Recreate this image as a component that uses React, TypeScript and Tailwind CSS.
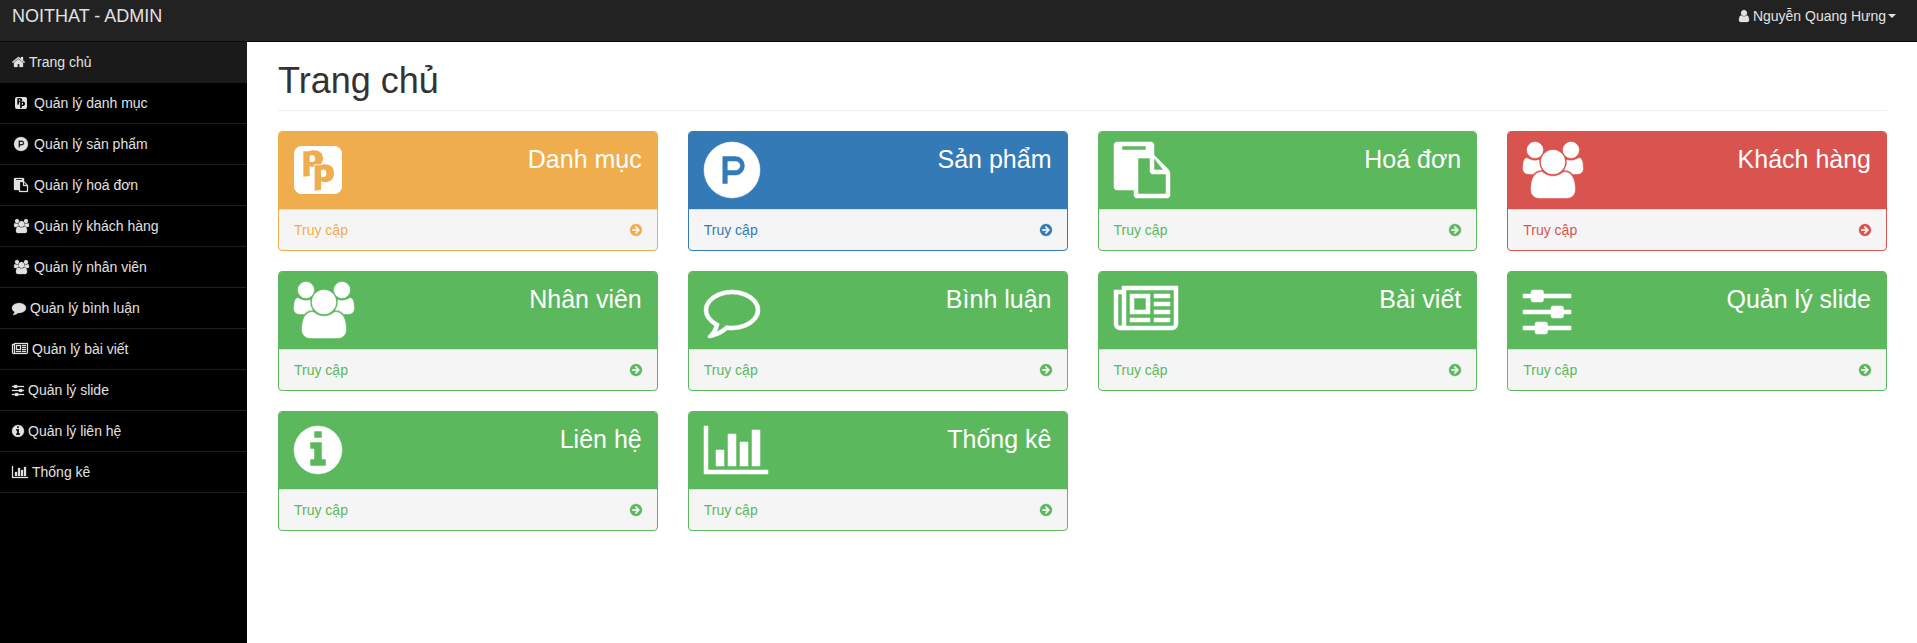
import type { ReactNode } from "react";

type IconName =
  | "home" | "user" | "users" | "pp" | "producthunt" | "paste" | "comment" | "commentO"
  | "newspaper" | "sliders" | "info" | "chart" | "arrow";

const glyphs: Record<IconName, { x: number; w: number; body: ReactNode }> = {
  home: {
    x: 64, w: 1664,
    body: <path d="M1472 992v480q0 26-19 45t-45 19h-384v-384h-256v384h-384q-26 0-45-19t-19-45v-480q0-1 .5-3t.5-3l575-474 575 474q1 2 1 6zm223-69l-62 74q-8 9-21 11h-3q-13 0-21-7l-692-577-692 577q-12 8-24 7-13-2-21-11l-62-74q-8-10-7-23.5t11-21.5l719-599q32-26 76-26t76 26l244 204v-195q0-14 9-23t23-9h192q14 0 23 9t9 23v408l219 182q10 8 11 21.5t-7 23.5z" />,
  },
  user: {
    x: 256, w: 1280,
    body: <path d="M1536 1399q0 109-62.5 187t-150.5 78h-854q-88 0-150.5-78t-62.5-187q0-85 8.5-160.5t31.5-152 58.5-131 94-89 134.5-34.5q131 128 313 128t313-128q76 0 134.5 34.5t94 89 58.5 131 31.5 152 8.5 160.5zm-256-887q0 159-112.5 271.5t-271.5 112.5-271.5-112.5-112.5-271.5 112.5-271.5 271.5-112.5 271.5 112.5 112.5 271.5z" />,
  },
  users: {
    x: -64, w: 1920,
    body: <path d="M529 896q-162 5-265 128h-134q-82 0-138-40.5t-56-118.5q0-353 124-353 6 0 43.5 21t97.5 42.5 119 21.5q67 0 133-23-5 37-5 66 0 139 81 256zm1071 637q0 120-73 189.5t-194 69.5h-874q-121 0-194-69.5t-73-189.5q0-53 3.5-103.5t14-109 26.5-108.5 43-97.5 62-81 85.5-53.5 111.5-20q10 0 43 21.5t73 48 107 48 135 21.5 135-21.5 107-48 73-48 43-21.5q61 0 111.5 20t85.5 53.5 62 81 43 97.5 26.5 108.5 14 109 3.5 103.5zm-1024-1277q0 106-75 181t-181 75-181-75-75-181 75-181 181-75 181 75 75 181zm704 384q0 159-112.5 271.5t-271.5 112.5-271.5-112.5-112.5-271.5 112.5-271.5 271.5-112.5 271.5 112.5 112.5 271.5zm576 225q0 78-56 118.5t-138 40.5h-134q-103-123-265-128 81-117 81-256 0-29-5-66 66 23 133 23 59 0 119-21.5t97.5-42.5 43.5-21q124 0 124 353zm-128-609q0 106-75 181t-181 75-181-75-75-181 75-181 181-75 181 75 75 181z" />,
  },
  pp: {
    x: 0, w: 1536,
    body: (
      <g transform="translate(0 128) scale(10.6667)" strokeWidth="0">
        <mask id="pp-cut" maskUnits="userSpaceOnUse" x="0" y="0" width="144" height="144">
          <rect width="144" height="144" rx="23" fill="#fff" />
          <path d="M28 16H45Q51 13 59 13C77 13 87 22 87 37S77 63 60 63Q52 63 47 60V90L28 92Z" fill="#000" />
          <path d="M47 29Q61 22 63 37T47 47Z" fill="#fff" />
          <path
            d="M62 58H79Q85 55 93 55C111 55 120 66 120 82S110 109 94 109Q86 109 81 106V131L62 134Z"
            fill="#000" stroke="#fff" strokeWidth="5" paintOrder="stroke"
          />
          <path d="M81 73Q96 65 97 81T81 92Z" fill="#fff" />
        </mask>
        <rect width="144" height="144" mask="url(#pp-cut)" />
      </g>
    ),
  },
  producthunt: {
    x: 0, w: 1792,
    body: (
      <path fillRule="evenodd" d="M0 896a896 896 0 1 0 1792 0a896 896 0 1 0 -1792 0ZM583 448H1015A314 314 0 0 1 1015 1075H763V1344H583ZM763 627V896H1015A134.500 134.500 0 0 0 1015 627Z" />
    ),
  },
  paste: {
    x: 0, w: 1792,
    body: (
      <path fillRule="evenodd" d="M96 0H1184q40 0 68 28t28 68V424q21 13 36 28L1724 860q28 28 48 76t20 88V1696q0 40-28 68t-68 28H736q-40 0-68-28t-28-68V1536H96q-40 0-68-28T0 1440V96Q0 56 28 28T96 0ZM288 128q-13 0-22.500 9.500T256 160v64q0 13 9.500 22.500T288 256H992q13 0 22.500-9.500T1024 224v-64q0-13-9.500-22.500T992 128ZM768 512V1664H1664V1024H1248q-40 0-68-28t-28-68V512ZM1280 512V896H1579Z" />
    ),
  },
  comment: {
    x: 0, w: 1792,
    body: <path d="M1792 896q0 174-120 321.5t-326 233-450 85.5q-70 0-145-8-198 175-460 242-49 14-114 22-17 2-30.5-9t-17.5-29v-1q-3-4-.5-12t2-10 4.500-9.500l6-9 7-8.500 8-9q7-8 31-34.500t34.500-38 31-39.500 32.500-51 27-59 26-76q-157-89-247.500-220t-90.500-281q0-130 71-248.500t191-204.500 286-136.500 348-50.500q244 0 450 85.500t326 233 120 321.500z" />,
  },
  commentO: {
    x: 0, w: 1792,
    body: <path d="M896 384q-204 0-381.5 69.5t-282 187.5-104.5 255q0 112 71.5 213.5t201.5 175.5l87 50-27 96q-24 91-70 172 152-63 275-171l43-38 57 6q69 8 130 8 204 0 381.5-69.5t282-187.5 104.5-255-104.5-255-282-187.5-381.5-69.5zm896 512q0 174-120 321.5t-326 233-450 85.5q-70 0-145-8-198 175-460 242-49 14-114 22h-5q-15 0-27-10.5t-16-27.5v-1q-3-4-.5-12t2-10 4.5-9.5l6-9 7-8.5 8-9q7-8 31-34.5t34.5-38 31-39.5 32.5-51 27-59 26-76q-157-89-247.5-220t-90.5-281q0-174 120-321.5t326-233 450-85.5 450 85.500 326 233 120 321.500z" />,
  },
  newspaper: {
    x: 0, w: 2048,
    body: (
      <path fillRule="evenodd" d="M256 128H2048V1344q0 80-56 136t-136 56H192q-80 0-136-56T0 1344V256H256ZM128 384V1344q0 26 19 45t45 19 45-19 19-45V384ZM384 256V1344q0 33-11 64H1856q26 0 45-19t19-45V256ZM512 384H1152V1024H512ZM640 512V896H1024V512ZM1280 384H1792V512H1280ZM1280 640H1792V768H1280ZM1280 896H1792V1024H1280ZM512 1152H1152V1280H512ZM1280 1152H1792V1280H1280Z" />
    ),
  },
  sliders: {
    x: 0, w: 1536,
    body: (
      <>
        <path d="M0 384H272V512H0ZM624 384H1536V512H624ZM0 896H912V1024H0ZM1264 896H1536V1024H1264ZM0 1408H400V1536H0ZM752 1408H1536V1536H752Z" />
        <rect x="256" y="256" width="400" height="384" rx="64" />
        <rect x="896" y="768" width="400" height="384" rx="64" />
        <rect x="384" y="1280" width="400" height="384" rx="64" />
      </>
    ),
  },
  info: {
    x: 128, w: 1536,
    body: <path d="M1152 1376v-160q0-14-9-23t-23-9h-96v-512q0-14-9-23t-23-9h-320q-14 0-23 9t-9 23v160q0 14 9 23t23 9h96v320h-96q-14 0-23 9t-9 23v160q0 14 9 23t23 9h448q14 0 23-9t9-23zm-128-896v-160q0-14-9-23t-23-9h-192q-14 0-23 9t-9 23v160q0 14 9 23t23 9h192q14 0 23-9t9-23zm640 416q0 209-103 385.5t-279.5 279.5-385.5 103-385.5-103-279.5-279.5-103-385.5 103-385.5 279.5-279.5 385.5-103 385.5 103 279.5 279.5 103 385.5z" />,
  },
  chart: {
    x: 0, w: 2048,
    body: <path d="M0 128H128V1536H2048V1664H0ZM384 896H640V1408H384ZM768 384H1024V1408H768ZM1152 640H1408V1408H1152ZM1536 256H1792V1408H1536Z" />,
  },
  arrow: {
    x: 128, w: 1536,
    body: <path d="M1413 896q0-27-18-45l-91-91-362-362q-18-18-45-18t-45 18l-91 91q-18 18-18 45t18 45l189 189h-502q-26 0-45 19t-19 45v128q0 26 19 45t45 19h502l-189 189q-19 19-19 45t19 45l91 91q18 18 45 18t45-18l362-362 91-91q18-18 18-45zm251 0q0 209-103 385.5t-279.5 279.5-385.5 103-385.5-103-279.5-279.5-103-385.5 103-385.5 279.5-279.5 385.5-103 385.5 103 279.5 279.5 103 385.5z" />,
  },
};

function Icon({ name, big = false }: { name: IconName; big?: boolean }) {
  const g = glyphs[name];
  return (
    <svg
      viewBox={`${g.x} 0 ${g.w} 1792`}
      fill="currentColor"
      stroke="currentColor"
      strokeWidth={big ? 16 : 36}
      className={big ? "h-14 w-auto shrink-0 overflow-visible" : "h-3.5 w-auto shrink-0 overflow-visible"}
    >
      {g.body}
    </svg>
  );
}

const menu: { icon: IconName; label: string; fixed?: boolean }[] = [
  { icon: "home", label: "Trang chủ" },
  { icon: "pp", label: "Quản lý danh mục", fixed: true },
  { icon: "producthunt", label: "Quản lý sản phẩm", fixed: true },
  { icon: "paste", label: "Quản lý hoá đơn", fixed: true },
  { icon: "users", label: "Quản lý khách hàng", fixed: true },
  { icon: "users", label: "Quản lý nhân viên", fixed: true },
  { icon: "comment", label: "Quản lý bình luận" },
  { icon: "newspaper", label: "Quản lý bài viết" },
  { icon: "sliders", label: "Quản lý slide" },
  { icon: "info", label: "Quản lý liên hệ" },
  { icon: "chart", label: "Thống kê" },
];

const tones = {
  yellow: { border: "border-[#f0ad4e]", bg: "bg-[#f0ad4e]", text: "text-[#f0ad4e]" },
  blue: { border: "border-[#337ab7]", bg: "bg-[#337ab7]", text: "text-[#337ab7]" },
  green: { border: "border-[#5cb85c]", bg: "bg-[#5cb85c]", text: "text-[#5cb85c]" },
  red: { border: "border-[#d9534f]", bg: "bg-[#d9534f]", text: "text-[#d9534f]" },
};

const cards: { icon: IconName; title: string; tone: keyof typeof tones }[] = [
  { icon: "pp", title: "Danh mục", tone: "yellow" },
  { icon: "producthunt", title: "Sản phẩm", tone: "blue" },
  { icon: "paste", title: "Hoá đơn", tone: "green" },
  { icon: "users", title: "Khách hàng", tone: "red" },
  { icon: "users", title: "Nhân viên", tone: "green" },
  { icon: "commentO", title: "Bình luận", tone: "green" },
  { icon: "newspaper", title: "Bài viết", tone: "green" },
  { icon: "sliders", title: "Quản lý slide", tone: "green" },
  { icon: "info", title: "Liên hệ", tone: "green" },
  { icon: "chart", title: "Thống kê", tone: "green" },
];

function Card({ icon, title, tone }: (typeof cards)[number]) {
  const t = tones[tone];
  return (
    <a href="#" className={`block h-[120px] overflow-hidden rounded border bg-[#f5f5f5] ${t.border}`}>
      <div className={`flex h-[77px] justify-between px-[15px] pt-2.5 text-white ${t.bg}`}>
        <Icon name={icon} big />
        <div className="text-[25px] leading-[34px]">{title}</div>
      </div>
      <div className={`flex h-[41px] items-center justify-between border-t border-[#ddd] px-[15px] ${t.text}`}>
        <span>Truy cập</span>
        <Icon name="arrow" />
      </div>
    </a>
  );
}

export default function App() {
  return (
    <div className="flex h-[643px] flex-col overflow-hidden bg-white font-['Liberation_Sans',Arial,sans-serif] text-sm leading-5 text-[#333]">
      <header className="flex h-[42px] shrink-0 items-start justify-between border-b border-[#080808] bg-[#222] text-[#e1e1e1]">
        <div className="pt-[6px] pl-3 text-lg leading-5">NOITHAT - ADMIN</div>
        <div className="flex items-center pt-[6px] pr-[21px]">
          <Icon name="user" />
          <span className="pl-1">Nguyễn Quang Hưng</span>
          <span className="ml-0.5 border-x-4 border-t-4 border-x-transparent border-t-current" />
        </div>
      </header>
      <div className="flex min-h-0 flex-1">
        <nav className="w-[247px] shrink-0 bg-black text-[#e1e1e1]">
          {menu.map((m, i) => (
            <a
              key={m.label}
              href="#"
              className={`flex h-[41px] items-center border-b pl-3 ${i === 0 ? "border-[#1a1a1a] bg-[#1a1a1a]" : "border-[#1f1f18]"}`}
            >
              <span className={m.fixed ? "flex w-[18px] justify-center" : "flex"}>
                <Icon name={m.icon} />
              </span>
              <span className="pl-1">{m.label}</span>
            </a>
          ))}
        </nav>
        <main className="min-w-0 flex-1 pr-[30px] pl-[31px]">
          <h1 className="h-[69px] border-b border-[#eee] pt-[19px] text-4xl leading-10">Trang chủ</h1>
          <div className="grid grid-cols-4 gap-x-[30px] gap-y-5 pt-5">
            {cards.map((c) => (
              <Card key={c.title} {...c} />
            ))}
          </div>
        </main>
      </div>
    </div>
  );
}
